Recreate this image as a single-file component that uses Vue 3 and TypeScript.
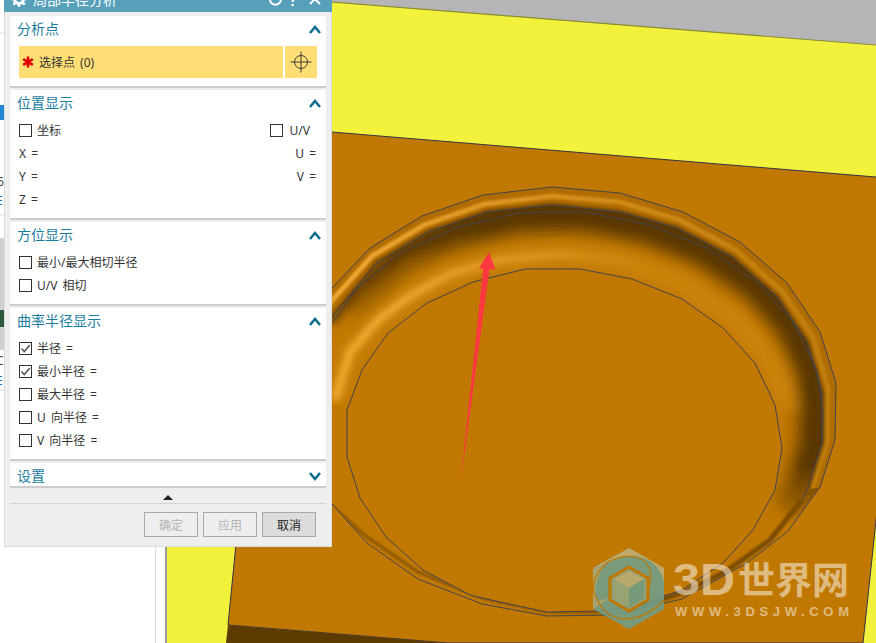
<template>
  <div class="page">
    <svg class="scene" width="876" height="643" viewBox="0 0 876 643">
      <defs>
        <filter id="blur1" x="-10%" y="-10%" width="120%" height="120%"><feGaussianBlur stdDeviation="1.200" /></filter>
        <filter id="blur3" x="-10%" y="-10%" width="120%" height="120%"><feGaussianBlur stdDeviation="3" /></filter>
        <filter id="blur8" x="-10%" y="-10%" width="120%" height="120%"><feGaussianBlur stdDeviation="8" /></filter>
        <clipPath id="ringClip"><path :d="ringPath" clip-rule="evenodd" /></clipPath>
        <clipPath id="rimClip"><polygon :points="rimArea" /></clipPath>
        <linearGradient id="fadeMaskGrad" gradientUnits="userSpaceOnUse" x1="0" y1="465" x2="0" y2="530">
          <stop offset="0" stop-color="#fff" />
          <stop offset="1" stop-color="#000" />
        </linearGradient>
        <mask id="fadeMask" maskUnits="userSpaceOnUse" x="0" y="0" width="876" height="643">
          <rect width="876" height="643" fill="url(#fadeMaskGrad)" />
        </mask>
        <linearGradient id="darkGrad" gradientUnits="userSpaceOnUse" x1="340" y1="0" x2="480" y2="0">
          <stop offset="0" stop-color="#5a3800" stop-opacity="0.25" />
          <stop offset="1" stop-color="#5a3800" />
        </linearGradient>
        <linearGradient id="glowGrad" gradientUnits="userSpaceOnUse" x1="380" y1="0" x2="660" y2="0">
          <stop offset="0" stop-color="#f6ae36" />
          <stop offset="0.6" stop-color="#dc9420" />
          <stop offset="1" stop-color="#d08a18" stop-opacity="0" />
        </linearGradient>
        <linearGradient id="fadeDown" gradientUnits="userSpaceOnUse" x1="0" y1="400" x2="0" y2="500">
          <stop offset="0" stop-color="#d48c18" />
          <stop offset="1" stop-color="#d48c18" stop-opacity="0" />
        </linearGradient>
        <linearGradient id="rimGrad" gradientUnits="userSpaceOnUse" x1="340" y1="0" x2="820" y2="0">
          <stop offset="0" stop-color="#f0a834" />
          <stop offset="0.5" stop-color="#d48e1c" />
          <stop offset="1" stop-color="#c07e0c" />
        </linearGradient>
      </defs>

      <rect width="876" height="643" fill="#fff" />
      <path d="M0 33H4M0 215H4M0 390H4M155.500 490V643" stroke="#ddd" fill="none" />
      <rect x="0" y="105" width="4" height="15" fill="#1f86d8" />
      <rect x="0" y="238" width="4" height="112" fill="#d0d0d4" />
      <rect x="0" y="310" width="4" height="17" fill="#2d5a3c" />
      <text class="stray" x="-3" y="186">6</text>
      <text class="stray blue" x="-4" y="205">E</text>
      <text class="stray" x="-4" y="365">C</text>
      <text class="stray blue" x="-4" y="385">E</text>
      <rect x="165" y="0" width="2" height="643" fill="#9a9a9a" />

      <!-- 3d view -->
      <rect x="167" y="0" width="709" height="643" fill="#b5b5b7" />
      <polygon points="167,-11 876,45 876,643 167,643" fill="#f2f23c" />
      <polyline points="167,-11 876,45" fill="none" stroke="#8b8b30" stroke-width="1.200" />
      <polygon points="277,127.500 912,180 875,530 863,643 448,643 228,625" fill="#c07800" stroke="#33334a" stroke-width="1" />
      <polygon points="228,625 448,643 226,643" fill="#5c3a00" />

      <g clip-path="url(#ringClip)">
        <g mask="url(#fadeMask)">
          <polyline :points="shadePts" fill="none" stroke="url(#darkGrad)" stroke-width="38" filter="url(#blur8)" />
          <polyline :points="shadePts" fill="none" stroke="url(#darkGrad)" stroke-width="14" opacity="0.75" filter="url(#blur3)" />
        </g>
        <polyline points="332,323 357,288 402,252 458,227" fill="none" stroke="#5a3800" stroke-width="10" opacity="0.6" filter="url(#blur3)" />
        <polyline :points="brightPts" fill="none" stroke="url(#fadeDown)" stroke-width="16" opacity="0.8" filter="url(#blur8)" />
        <polyline :points="brightPts" fill="none" stroke="url(#glowGrad)" stroke-width="7" filter="url(#blur3)" />
        <polygon :points="rimArea" fill="#b06c00" />
        <g clip-path="url(#rimClip)">
          <polyline :points="rimPts" fill="none" stroke="url(#rimGrad)" stroke-width="5" filter="url(#blur1)" />
          <polyline :points="upperPts" fill="none" stroke="#7a4c00" stroke-width="5" filter="url(#blur1)" />
        </g>
        <polyline points="332,506 367,537 418,572 482,598 547,612 613,612" fill="none" stroke="#8a5600" stroke-width="3" filter="url(#blur1)" />
        <polyline points="802,500 770,540 725,572 685,592 640,606" fill="none" stroke="#7a4c00" stroke-width="5" filter="url(#blur1)" />
      </g>
      <g fill="none" stroke="#44444c" stroke-width="1">
        <path :d="ringPath" />
        <polyline :points="upperPts" />
        <polyline :points="lowPts" />
      </g>

      <!-- arrow -->
      <polygon points="489,252 495.500,269.500 489.500,269.500 460.500,483 483,269 479,268" fill="#fb3a40" />

      <!-- watermark -->
      <g opacity="0.88">
        <polygon points="629,548 664,568 664,609 629,629 593,609 593,568" fill="#70a08d" />
        <path d="M593,568 L629,548 L664,568 L664,582 C660,560 635,548 608,562 Z" fill="#bdb07c" />
        <path d="M593,568 L608,562 C598,572 592,590 598,601 L610,598 L593,609 Z" fill="#a6a97f" />
        <path d="M608,562 C635,548 660,560 647,593 M598,601 C610,625 640,625 664,600 M608,562 C592,575 590,590 598,601" fill="none" stroke="#c07800" stroke-width="1.200" />
        <polygon points="629,567 648,578 648,600 629,611 610,600 610,578" fill="#8fa582" stroke="#c07800" stroke-width="3" />
        <polygon points="629,571 644,579 629,588 614,579" fill="#bab07c" />
        <polygon points="614,579 629,588 629,607 614,598" fill="#93a984" />
        <polygon points="644,579 629,588 629,607 644,598" fill="#6d9f8c" />
      </g>
      <text class="mark-big" x="673" y="595" textLength="62" lengthAdjust="spacingAndGlyphs">3D</text>
      <text class="mark-cn" x="738" y="594">世界网</text>
      <text class="mark-url" x="675" y="616" textLength="174">WWW.3DSJW.COM</text>
    </svg>

    <section class="dialog">
      <header class="title-bar">
        <svg class="gear" width="16" height="16" viewBox="0 0 16 16">
          <circle cx="8" cy="8" r="4.500" fill="none" stroke="#fff" stroke-width="3" />
          <path d="M8 0V3M8 13V16M0 8H3M13 8H16M2.300 2.300L4.500 4.500M11.500 11.500L13.700 13.700M13.700 2.300L11.500 4.500M4.500 11.500L2.300 13.700" stroke="#fff" stroke-width="2.500" />
        </svg>
        <span class="title-text">局部半径分析</span>
        <svg class="title-icons" width="56" height="16" viewBox="0 0 56 16" fill="none" stroke="#fff" stroke-width="2">
          <path d="M11.500 4.500A5.500 5.500 0 1 1 4 4" />
          <path d="M21 5A3.500 3.500 0 1 1 26 8.500C25 9.200 24.500 9.800 24.500 11" />
          <circle cx="24.500" cy="14" r="1.300" fill="#fff" stroke="none" />
          <path d="M42 3L52 13M52 3L42 13" />
        </svg>
      </header>

      <div class="panel first">
        <div class="panel-head">
          <span>分析点</span>
          <svg class="chev" width="12" height="9" viewBox="0 0 12 9"><path d="M1 8L6 2L11 8" /></svg>
        </div>
        <div class="pick-row">
          <div class="pick-label">
            <svg width="12" height="12" viewBox="0 0 12 12" stroke="#e00000" stroke-width="2.600"><path d="M6 0.500V11.500M1.200 3.200L10.800 8.800M10.800 3.200L1.200 8.800" /></svg>
            <span>选择点 (0)</span>
          </div>
          <div class="pick-btn">
            <svg width="22" height="22" viewBox="0 0 22 22" fill="none" stroke="#3a3a3a" stroke-width="1"><circle cx="11" cy="11" r="6.500" /><path d="M0.500 11H21.500M11 0.500V21.500" /></svg>
          </div>
        </div>
      </div>

      <div class="panel">
        <div class="panel-head">
          <span>位置显示</span>
          <svg class="chev" width="12" height="9" viewBox="0 0 12 9"><path d="M1 8L6 2L11 8" /></svg>
        </div>
        <div class="row split">
          <label class="check"><i class="box"></i><span>坐标</span></label>
          <label class="check uv"><i class="box"></i><span>U/V</span></label>
        </div>
        <div class="row split"><span>X =</span><span>U =</span></div>
        <div class="row split"><span>Y =</span><span>V =</span></div>
        <div class="row split"><span>Z =</span></div>
      </div>

      <div class="panel">
        <div class="panel-head">
          <span>方位显示</span>
          <svg class="chev" width="12" height="9" viewBox="0 0 12 9"><path d="M1 8L6 2L11 8" /></svg>
        </div>
        <div class="row"><label class="check"><i class="box"></i><span>最小/最大相切半径</span></label></div>
        <div class="row"><label class="check"><i class="box"></i><span>U/V 相切</span></label></div>
      </div>

      <div class="panel">
        <div class="panel-head">
          <span>曲率半径显示</span>
          <svg class="chev" width="12" height="9" viewBox="0 0 12 9"><path d="M1 8L6 2L11 8" /></svg>
        </div>
        <div class="row" v-for="item in radiusRows" :key="item.label">
          <label class="check">
            <i class="box">
              <svg v-if="item.on" width="11" height="11" viewBox="0 0 11 11"><path d="M1.500 5.500L4.300 8.500L9.800 2" fill="none" stroke="#555" stroke-width="1.500" /></svg>
            </i>
            <span>{{ item.label }}</span>
          </label>
        </div>
      </div>

      <div class="panel closed">
        <div class="panel-head">
          <span>设置</span>
          <svg class="chev" width="12" height="9" viewBox="0 0 12 9"><path d="M1 1L6 7L11 1" /></svg>
        </div>
      </div>

      <div class="more"><i class="tri"></i></div>

      <footer class="actions">
        <button class="off">确定</button>
        <button class="off">应用</button>
        <button class="cancel">取消</button>
      </footer>
    </section>
  </div>
</template>

<script setup lang="ts">
const outer = '300,335 332,288 370,248 422,216 483,195 552,187 620,193 683,212 740,242 787,283 820,332 836,383 835,440 820,487 788,531 747,563 682,599 613,615 547,616 482,604 418,579 367,543 332,504 300,465 290,400'
const inner = '362,370 388,333 427,303 473,282 525,269 580,269 632,279 682,299 723,328 755,363 775,405 782,448 775,490 753,530 723,563 682,590 630,607 600,611 547,612 500,602 470,595 423,570 386,537 360,498 347,457 347,410'

const ringPath = `M${outer.replace(/ /g, ' L')} Z M${inner.replace(/ /g, ' L')} Z`

const rimPts = '305,335 335,297 372,256 424,225 485,204 552,196 620,202 680,220 736,250 782,291 813,337 828,388 827,441 812,488'
const upperPts = '320,330 332,317 377,263 428,232 487,212 552,205 620,212 677,228 732,257 777,297 807,342 822,392 822,443 807,490 802,500'
const lowPts = '332,323 357,288 402,252 458,227 518,213 585,212 650,225 707,248 757,282 793,322 817,370 823,413 822,443'
const shadePts = '345,305 402,252 458,227 518,213 585,212 650,225 707,248 757,282 793,322 815,370 818,413 818,443 805,490 790,515'
const brightPts = '335,400 350,352 378,320 410,296 450,274 500,260 560,254 620,260 680,282 733,317 770,360 792,410'

// band between the outer edge and the first inner line, kept apart so its edge stays sharp
const rimArea = '300,335 332,288 370,248 422,216 483,195 552,187 620,193 683,212 740,242 787,283 820,332 836,383 835,440 820,487 807,490 822,443 822,392 807,342 777,297 732,257 677,228 620,212 552,205 487,212 428,232 377,263 332,317 320,330'

const radiusRows = [
  { label: '半径 =', on: true },
  { label: '最小半径 =', on: true },
  { label: '最大半径 =', on: false },
  { label: 'U 向半径 =', on: false },
  { label: 'V 向半径 =', on: false },
]
</script>

<style>
html, body { margin: 0; overflow: hidden; background: #fff; }
</style>

<style scoped>
.page {
  position: relative;
  width: 876px;
  height: 643px;
  overflow: hidden;
  font-family: "Noto Sans", "Noto Sans CJK SC", sans-serif;
  font-size: 12px;
  color: #333;
  word-spacing: 2px;
}
.scene { position: absolute; left: 0; top: 0; display: block; }
.stray { font: 12px "Noto Sans", sans-serif; fill: #444; }
.stray.blue { fill: #1f6fc0; }
.mark-big { font: bold 44px "Liberation Sans", sans-serif; fill: #ffffff; fill-opacity: 0.5; }
.mark-cn { font: bold 37px "Noto Sans CJK SC", sans-serif; fill: #ffffff; fill-opacity: 0.5; }
.mark-url { font: bold 13px "Liberation Sans", sans-serif; fill: #ffffff; fill-opacity: 0.5; }

.dialog {
  position: absolute;
  left: 4px;
  top: -14px;
  width: 328px;
  height: 561px;
  box-sizing: border-box;
  background: #eeeeee;
  border: 1px solid #dcdcdc;
  border-top: 0;
}
.title-bar {
  display: flex;
  align-items: center;
  height: 26px;
  margin: 0 -1px;
  padding: 0 8px 0 7px;
  background: #57a0b9;
  color: #fff;
  font-size: 14px;
}
.gear { flex: none; }
.title-text { margin-left: 6px; flex: 1; }
.title-icons { flex: none; }

.panel {
  margin: 4px 5px 0;
  padding: 0 10px 7px 9px;
  background: #fff;
  border-bottom: 2px solid #cccccc;
}
.panel + .panel { margin-top: 2px; }
.panel.first { padding-bottom: 8px; }
.panel.closed { margin-top: 2px; padding-bottom: 0; }
.panel-head {
  display: flex;
  align-items: flex-start;
  justify-content: space-between;
  height: 29px;
  margin-left: -2px;
  padding-top: 3px;
  box-sizing: border-box;
  color: #1a7c9e;
  font-size: 14px;
  line-height: 19px;
}
.panel.first .panel-head { height: 30px; }
.panel.closed .panel-head { height: 23px; padding-top: 3px; }
.chev { margin: 6px -5px 0 0; fill: none; stroke: #0c6c8c; stroke-width: 2.500; }

.pick-row { display: flex; gap: 2px; height: 32px; margin-right: -1px; }
.pick-label {
  flex: 1;
  display: flex;
  align-items: center;
  gap: 5px;
  padding-left: 3px;
  background: #ffdf75;
  color: #333;
}
.pick-btn {
  display: flex;
  align-items: center;
  justify-content: center;
  width: 32px;
  background: #ffdf75;
}

.row { display: flex; align-items: center; height: 23px; line-height: 23px; }
.row.split { justify-content: space-between; }
.check { display: flex; align-items: center; }
.check.uv { margin-right: 6px; }
.check.uv .box { margin-right: 7px; }
.box {
  display: flex;
  align-items: center;
  justify-content: center;
  width: 11px;
  height: 11px;
  margin-right: 5px;
  border: 1px solid #333;
  background: #fff;
}

.more {
  display: flex;
  justify-content: center;
  align-items: center;
  height: 16px;
  margin: 0 5px;
  border-bottom: 1px solid #d2d2d2;
  box-sizing: border-box;
  padding-top: 3px;
}
.tri {
  width: 0;
  height: 0;
  border-left: 5px solid transparent;
  border-right: 5px solid transparent;
  border-bottom: 5px solid #222;
}
.actions {
  display: flex;
  justify-content: flex-end;
  gap: 5px;
  padding: 8px 15px 0 0;
}
.actions button {
  width: 54px;
  height: 25px;
  padding: 0;
  box-sizing: border-box;
  border: 1px solid #a8a8a8;
  background: #eeeeee;
  font: 12px "Noto Sans CJK SC", sans-serif;
  color: #222;
}
.actions .off { color: #b4b4b4; }
.actions .cancel { background: #dcdcdc; }
</style>
